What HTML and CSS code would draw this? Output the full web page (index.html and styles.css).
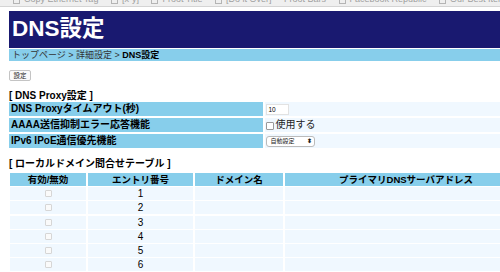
FILE: index.html
```html
<!DOCTYPE html>
<html lang="ja">
<head>
<meta charset="utf-8">
<title>DNS設定</title>
<link rel="stylesheet" href="styles.css">
</head>
<body>
<div class="chrome">
  <span class="bm"><i></i>Copy Ethernet Tag</span>
  <span class="bm"><i></i>[x-y]</span>
  <span class="bm"><i></i>Froot Title</span>
  <span class="bm"><i></i>[Do it Over]</span>
  <span class="bm">Froot Bars</span>
  <span class="bm"><i></i>Facebook Republic</span>
  <span class="bm"><i></i>Our Best Items</span>
  <span class="bm"><i></i>Facebook</span>
</div>
<div class="page">
  <h1 class="title">DNS設定</h1>
  <div class="crumbs">トップページ &gt; 詳細設定 &gt; <b>DNS設定</b></div>
  <button class="btn" type="button">設定</button>

  <h2 class="section">[ DNS Proxy設定 ]</h2>
  <div class="form">
    <div class="label">DNS Proxyタイムアウト(秒)</div>
    <div class="value"><span class="input">10</span></div>
    <div class="label">AAAA送信抑制エラー応答機能</div>
    <div class="value"><span class="check"></span><span class="use">使用する</span></div>
    <div class="label">IPv6 IPoE通信優先機能</div>
    <div class="value"><span class="select">自動設定<span class="arrows">⬍</span></span></div>
  </div>

  <h2 class="section second">[ ローカルドメイン問合せテーブル ]</h2>
  <div class="grid">
    <div class="th">有効/無効</div>
    <div class="th">エントリ番号</div>
    <div class="th">ドメイン名</div>
    <div class="th">プライマリDNSサーバアドレス</div>

    <div class="td"><span class="cb"></span></div><div class="td">1</div><div class="td"></div><div class="td"></div>
    <div class="td"><span class="cb"></span></div><div class="td">2</div><div class="td"></div><div class="td"></div>
    <div class="td"><span class="cb"></span></div><div class="td">3</div><div class="td"></div><div class="td"></div>
    <div class="td"><span class="cb"></span></div><div class="td">4</div><div class="td"></div><div class="td"></div>
    <div class="td"><span class="cb"></span></div><div class="td">5</div><div class="td"></div><div class="td"></div>
    <div class="td"><span class="cb"></span></div><div class="td">6</div><div class="td"></div><div class="td"></div>
    <div class="td"><span class="cb"></span></div><div class="td">7</div><div class="td"></div><div class="td"></div>
  </div>
</div>
</body>
</html>
```

FILE: styles.css
```css
html, body {
  margin: 0;
  padding: 0;
  overflow: hidden;
  background: #fff;
  font-family: "Liberation Sans", "Noto Sans CJK JP", sans-serif;
  color: #000;
}

.chrome {
  height: 6px;
  overflow: hidden;
  background: #efefef;
  border-bottom: 1px solid #d4d4d4;
  white-space: nowrap;
  padding-left: 13px;
  font-size: 9px;
  line-height: 10px;
  color: #a0a0a0;
}
.bm {
  display: inline-block;
  margin-top: -6px;
  margin-right: 10px;
  vertical-align: top;
}
.bm i {
  display: inline-block;
  width: 5px;
  height: 6px;
  border: 1px solid #b4b4b4;
  margin-right: 4px;
  vertical-align: top;
  margin-top: 2px;
}

.page {
  width: 560px;
  padding: 4px 0 0 9px;
}

.title {
  margin: 0;
  height: 37px;
  display: flex;
  align-items: center;
  padding-left: 3px;
  background: #191970;
  color: #fff;
  font-size: 22.5px;
  font-weight: bold;
  line-height: 1;
}

.crumbs {
  margin-top: 1px;
  height: 12px;
  padding-left: 3px;
  background: #87ceeb;
  font-size: 9px;
  line-height: 12px;
  color: #333;
}
.crumbs b { color: #000; }

.btn {
  display: block;
  margin-top: 9px;
  width: 22px;
  height: 11px;
  padding: 0;
  border: 1px solid #c4c4c4;
  border-radius: 2px;
  background: #fafafa;
  font-family: inherit;
  font-size: 6.5px;
  line-height: 9px;
  color: #222;
}

.section {
  margin: 8px 0 0 0;
  height: 13px;
  font-size: 10px;
  line-height: 13px;
  font-weight: bold;
}
.section.second {
  margin-top: 9px;
}

.form {
  display: grid;
  grid-template-columns: 254px 300px;
  grid-auto-rows: 14px;
  gap: 2px 1.5px;
}
.label {
  background: #87ceeb;
  font-size: 10px;
  font-weight: bold;
  line-height: 14px;
  padding-left: 2px;
  white-space: nowrap;
}
.value {
  background: #f0f8ff;
  display: flex;
  align-items: center;
  padding-left: 1px;
}
.input {
  width: 19px;
  height: 9px;
  border: 1px solid #e2e2e2;
  background: #fff;
  font-size: 6.5px;
  line-height: 9px;
  padding-left: 2px;
}
.check {
  width: 6px;
  height: 6px;
  border: 1px solid #999;
  border-radius: 1px;
  background: #fff;
  margin-right: 2px;
  margin-top: 2px;
}
.use {
  font-size: 10px;
  line-height: 14px;
  color: #222;
}
.select {
  display: flex;
  align-items: center;
  justify-content: space-between;
  width: 41px;
  height: 9px;
  padding: 0 2px 0 4px;
  border: 1px solid #bbb;
  border-radius: 3px;
  background: #fff;
  font-size: 6px;
  line-height: 9px;
  color: #222;
}
.arrows {
  font-size: 6px;
  font-weight: bold;
}

.grid {
  display: grid;
  grid-template-columns: 76px 105px 88px 242px;
  grid-template-rows: 13px;
  grid-auto-rows: 13px;
  gap: 1.2px 2px;
  margin: 3px 0 0 1px;
}
.th {
  background: #87ceeb;
  font-size: 9.5px;
  font-weight: bold;
  line-height: 13px;
  text-align: center;
  white-space: nowrap;
}
.td {
  background: #f0f8ff;
  font-size: 10px;
  line-height: 13px;
  text-align: center;
  display: flex;
  align-items: center;
  justify-content: center;
}
.cb {
  width: 5px;
  height: 5px;
  border: 1px solid #d6d6d6;
  border-radius: 1px;
  background: #fafafa;
}
```
